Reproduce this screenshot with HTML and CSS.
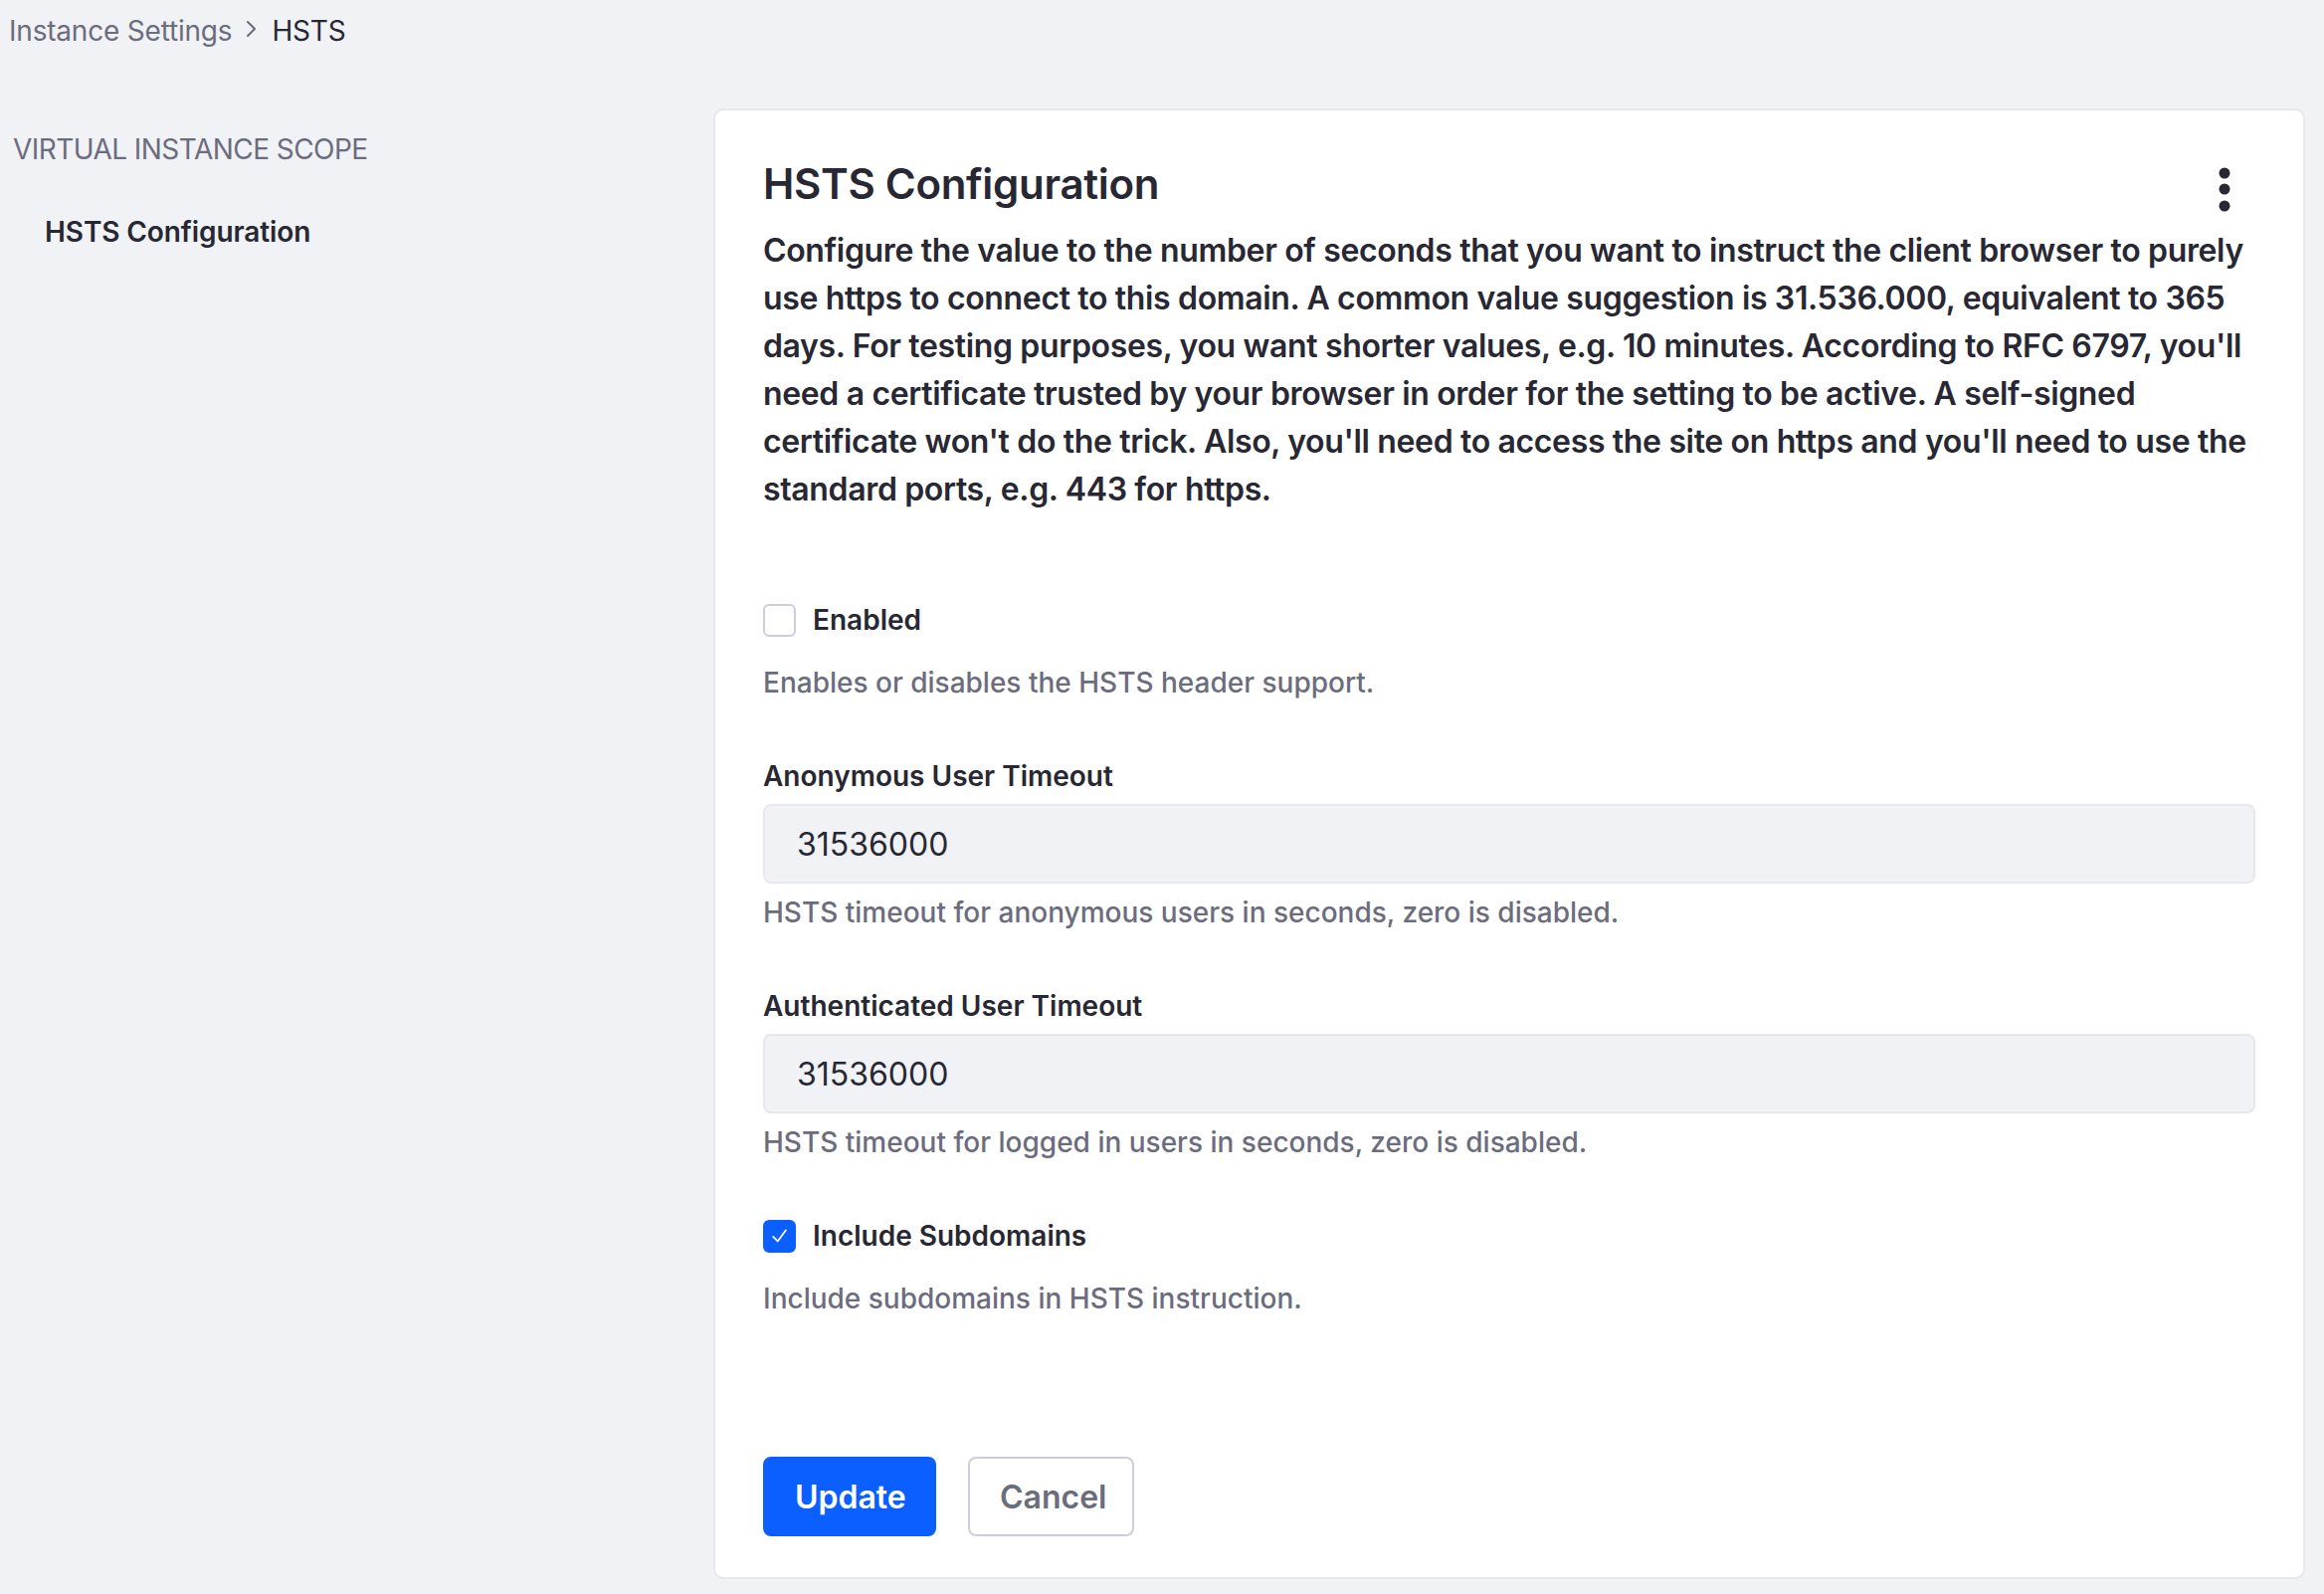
FILE: index.html
```html
<!DOCTYPE html>
<html lang="en">
<head>
<meta charset="utf-8">
<title>HSTS</title>
<link rel="stylesheet" href="styles.css">
</head>
<body>
<nav class="breadcrumb">
  <a class="crumb-link" href="#">Instance Settings</a>
  <svg class="crumb-sep" width="14" height="18" viewBox="0 0 14 18"><path d="M4 2 L11 9 L4 16" fill="none" stroke="#6b6c7e" stroke-width="2" stroke-linecap="round" stroke-linejoin="round"/></svg>
  <span class="crumb-active">HSTS</span>
</nav>
<div class="layout">
  <aside class="sidebar">
    <div class="side-heading">VIRTUAL INSTANCE SCOPE</div>
    <a class="side-item" href="#">HSTS Configuration</a>
  </aside>
  <main class="card">
    <div class="card-header">
      <h2 class="card-title">HSTS Configuration</h2>
      <button class="kebab" aria-label="Options">
        <svg width="14" height="46" viewBox="0 0 14 46"><circle cx="7" cy="6" r="5.5" fill="#272833"/><circle cx="7" cy="22" r="5.5" fill="#272833"/><circle cx="7" cy="39" r="5.5" fill="#272833"/></svg>
      </button>
    </div>
    <p class="description">Configure the value to the number of seconds that you want to instruct the client browser to purely use https to connect to this domain. A common value suggestion is 31.536.000, equivalent to 365 days. For testing purposes, you want shorter values, e.g. 10 minutes. According to RFC 6797, you'll need a certificate trusted by your browser in order for the setting to be active. A self-signed certificate won't do the trick. Also, you'll need to access the site on https and you'll need to use the standard ports, e.g. 443 for https.</p>

    <div class="form">
      <div class="group">
        <label class="check-row">
          <span class="checkbox"></span>
          <span class="check-label">Enabled</span>
        </label>
        <div class="help help-check">Enables or disables the HSTS header support.</div>
      </div>

      <div class="group">
        <div class="field-label">Anonymous User Timeout</div>
        <div class="input">31536000</div>
        <div class="help help-input">HSTS timeout for anonymous users in seconds, zero is disabled.</div>
      </div>

      <div class="group">
        <div class="field-label">Authenticated User Timeout</div>
        <div class="input">31536000</div>
        <div class="help help-input">HSTS timeout for logged in users in seconds, zero is disabled.</div>
      </div>

      <div class="group">
        <label class="check-row">
          <span class="checkbox checked">
            <svg width="32" height="32" viewBox="0 0 32 32"><path d="M9 17 L14 22 L23 10" fill="none" stroke="#ffffff" stroke-width="2" stroke-linecap="round" stroke-linejoin="round"/></svg>
          </span>
          <span class="check-label">Include Subdomains</span>
        </label>
        <div class="help help-check">Include subdomains in HSTS instruction.</div>
      </div>
    </div>

    <div class="actions">
      <button class="btn btn-primary">Update</button>
      <button class="btn btn-secondary">Cancel</button>
    </div>
  </main>
</div>
</body>
</html>
```
FILE: styles.css
```css
* { box-sizing: border-box; }
html, body { margin: 0; padding: 0; }
body {
  background: #f1f2f5;
  font-family: Inter, "Noto Sans", "Liberation Sans", sans-serif;
  color: #272833;
  width: 2336px;
  min-height: 1602px;
}
.breadcrumb {
  display: flex;
  align-items: center;
  height: 62px;
  padding-left: 9px;
  font-size: 28px;
  letter-spacing: -0.2px;
}
.crumb-link { color: #6b6c7e; text-decoration: none; }
.crumb-sep { margin: 0 14px 0 12px; position: relative; top: -2px; }
.crumb-active { color: #272833; }

.layout {
  display: flex;
  align-items: flex-start;
  margin-top: 47px;
  padding-right: 19px;
}
.sidebar {
  width: 717px;
  flex: none;
  padding-top: 21px;
  padding-left: 13px;
}
.side-heading {
  font-size: 28px;
  line-height: 40px;
  color: #6b6c7e;
  text-transform: uppercase;
  letter-spacing: -0.55px;
}
.side-item {
  display: block;
  margin-top: 43px;
  padding-left: 32px;
  font-size: 28px;
  line-height: 40px;
  font-weight: 600;
  color: #272833;
  text-decoration: none;
  letter-spacing: -0.1px;
}
.card {
  flex: 1;
  background: #fff;
  border: 2px solid #e7e7ed;
  border-radius: 10px;
  padding: 50px 48px 41px 48px;
}
.card-header {
  display: flex;
  justify-content: space-between;
  align-items: flex-start;
}
.card-title {
  margin: 0;
  font-size: 42px;
  line-height: 48px;
  font-weight: 600;
  letter-spacing: -0.3px;
}
.kebab {
  background: none;
  border: 0;
  padding: 0;
  width: 64px;
  height: 48px;
  display: flex;
  justify-content: center;
  align-items: flex-start;
  margin-top: 7px;
  margin-right: -1px;
}
.description {
  margin: 12px 0 0 0;
  font-size: 32px;
  line-height: 48px;
  font-weight: 600;
  letter-spacing: -0.35px;
}
.form { margin-top: 86px; }
.group { margin-bottom: 52px; }
.check-row {
  display: flex;
  align-items: center;
  height: 42px;
}
.checkbox {
  width: 33px;
  height: 33px;
  border: 2px solid #cdced9;
  border-radius: 6px;
  background: #fff;
  flex: none;
  display: flex;
  align-items: center;
  justify-content: center;
}
.checkbox.checked {
  background: #0b5fff;
  border-color: #0b5fff;
}
.check-label {
  margin-left: 17px;
  font-size: 28px;
  font-weight: 600;
  line-height: 42px;
}
.help {
  font-size: 28px;
  line-height: 42px;
  color: #6b6c7e;
  font-weight: 500;
}
.help-check { margin-top: 21px; }
.help-input { margin-top: 8px; }
.field-label {
  font-size: 28px;
  line-height: 42px;
  font-weight: 600;
  margin-bottom: 7px;
}
.input {
  height: 80px;
  background: #f1f2f5;
  border: 2px solid #e7e7ed;
  border-radius: 8px;
  padding: 0 32px;
  display: flex;
  align-items: center;
  font-size: 32px;
  color: #272833;
}
.actions {
  display: flex;
  gap: 32px;
  margin-top: 138px;
}
.btn {
  height: 80px;
  border-radius: 8px;
  font-family: inherit;
  font-size: 32px;
  font-weight: 600;
  padding: 0 30px;
  cursor: pointer;
}
.btn-primary {
  background: #0b5fff;
  color: #fff;
  border: 2px solid #0b5fff;
  width: 174px;
}
.btn-secondary {
  background: #fff;
  color: #6b6c7e;
  border: 2px solid #cdced9;
  width: 167px;
}
```
